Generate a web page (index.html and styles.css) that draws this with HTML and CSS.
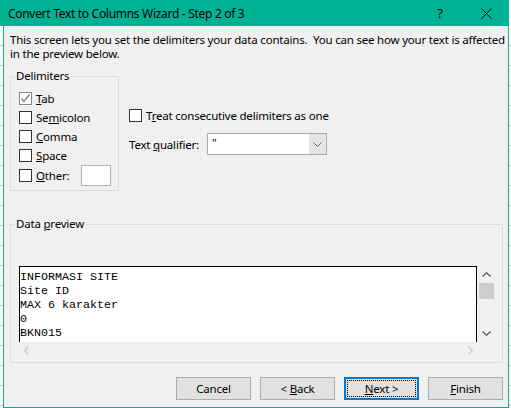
FILE: index.html
```html
<!DOCTYPE html>
<html>
<head>
<meta charset="utf-8">
<link rel="stylesheet" href="styles.css">
</head>
<body>
<div class="screen">
  <div class="titlebar">
    <span class="title">Convert Text to Columns Wizard - Step 2 of 3</span>
    <span class="tb-btn help">?</span>
    <span class="tb-btn close"><svg width="11" height="11" viewBox="0 0 11 11"><path d="M0.5 0.5L10.5 10.5M10.5 0.5L0.5 10.5" stroke="#000" stroke-width="1" fill="none"/></svg></span>
  </div>
  <div class="main">
    <div class="sheet sheet-left"></div>
    <div class="dialog">
      <p class="intro">This screen lets you set the delimiters your data contains.&nbsp; You can see how your text is affected<br>in the preview below.</p>
      <div class="top">
        <div class="group delims">
          <span class="legend">Delimiters</span>
          <div class="check-row"><span class="box checked"><svg width="11" height="11" viewBox="0 0 11 11"><path d="M1.5 5.5L4 8.5L9.5 1.5" stroke="#7a7a7a" stroke-width="1.3" fill="none"/></svg></span><span><u>T</u>ab</span></div>
          <div class="check-row"><span class="box"></span><span>Se<u>m</u>icolon</span></div>
          <div class="check-row"><span class="box"></span><span><u>C</u>omma</span></div>
          <div class="check-row"><span class="box"></span><span><u>S</u>pace</span></div>
          <div class="check-row other-row"><span class="box"></span><span><u>O</u>ther:</span><span class="other-input"></span></div>
        </div>
        <div class="options">
          <div class="check-row"><span class="box"></span><span>T<u>r</u>eat consecutive delimiters as one</span></div>
          <div class="qual-row">
            <span class="qual-label">Text <u>q</u>ualifier:</span>
            <div class="combo">
              <span class="combo-val">"</span>
              <span class="combo-btn"><svg width="9" height="5" viewBox="0 0 9 5"><path d="M0.5 0.5L4.5 4.5L8.5 0.5" stroke="#606060" stroke-width="1" fill="none"/></svg></span>
            </div>
          </div>
        </div>
      </div>
      <div class="group preview-group">
        <span class="legend">Data <u>p</u>review</span>
        <div class="preview">
          <div class="preview-main">
            <div class="preview-text">INFORMASI SITE
Site ID
MAX 6 karakter
0
BKN015</div>
            <div class="vscroll">
              <span class="sb-arrow"><svg width="9" height="5" viewBox="0 0 9 5"><path d="M0.5 4.5L4.5 0.8L8.5 4.5" stroke="#606060" stroke-width="1.4" fill="none"/></svg></span>
              <span class="thumb"></span>
              <span class="sb-space"></span>
              <span class="sb-arrow"><svg width="9" height="5" viewBox="0 0 9 5"><path d="M0.5 0.5L4.5 4.2L8.5 0.5" stroke="#606060" stroke-width="1.4" fill="none"/></svg></span>
            </div>
          </div>
          <div class="hscroll">
            <span class="sb-arrow-h"><svg width="5" height="9" viewBox="0 0 5 9"><path d="M4.5 0.5L0.8 4.5L4.5 8.5" stroke="#cdcdcd" stroke-width="1.4" fill="none"/></svg></span>
            <span class="sb-arrow-h"><svg width="5" height="9" viewBox="0 0 5 9"><path d="M0.5 0.5L4.2 4.5L0.5 8.5" stroke="#cdcdcd" stroke-width="1.4" fill="none"/></svg></span>
          </div>
        </div>
      </div>
      <div class="buttons">
        <span class="btn">Cancel</span>
        <span class="btn">&lt;&nbsp;<u>B</u>ack</span>
        <span class="btn default"><span><u>N</u>ext&nbsp;&gt;</span></span>
        <span class="btn"><u>F</u>inish</span>
      </div>
    </div>
    <div class="sheet sheet-right"></div>
  </div>
</div>
</body>
</html>
```

FILE: styles.css
```css
html, body {
  margin: 0;
  padding: 0;
}
body {
  width: 511px;
  height: 408px;
  overflow: hidden;
  background: #ffffff;
  font-family: "Noto Sans", "DejaVu Sans", sans-serif;
  font-size: 11.5px;
  letter-spacing: -0.2px;
  color: #000;
}
u {
  text-decoration: underline;
  text-decoration-thickness: 1px;
  text-underline-offset: 1px;
}
.screen {
  display: flex;
  flex-direction: column;
}
.titlebar {
  width: 509px;
  height: 26px;
  background: #00b294;
  display: flex;
  align-items: center;
  font-size: 12px;
  letter-spacing: -0.3px;
}
.title {
  flex: 1;
  padding-left: 8px;
}
.tb-btn {
  width: 46px;
  height: 26px;
  display: flex;
  align-items: center;
  justify-content: center;
}
.help {
  font-size: 13px;
}
.main {
  display: flex;
  height: 382px;
}
.sheet {
  background-color: #ffffff;
  background-image: repeating-linear-gradient(to bottom, transparent 0, transparent 19px, #c6c6c6 19px, #c6c6c6 20px);
}
.sheet-left {
  width: 3px;
}
.sheet-right {
  width: 2px;
}
.dialog {
  width: 506px;
  height: 382px;
  box-sizing: border-box;
  border: 1px solid #00b294;
  border-top: none;
  background: #f0f0f0;
  padding: 0 5px 7px 6px;
}
.intro {
  margin: 0;
  padding-top: 7px;
  line-height: 14px;
  white-space: nowrap;
}
.top {
  display: flex;
  align-items: flex-start;
  margin-top: 15px;
}
.group {
  position: relative;
  border: 1px solid #dcdcdc;
  box-sizing: border-box;
}
.legend {
  position: absolute;
  top: -8px;
  left: 4px;
  padding: 0 1px;
  background: #f0f0f0;
  line-height: 14px;
}
.delims {
  width: 109px;
  height: 115px;
  padding: 12px 7px 0 8px;
}
.check-row {
  display: flex;
  align-items: center;
  height: 19px;
  white-space: nowrap;
}
.other-row {
  height: 21px;
}
.box {
  width: 13px;
  height: 13px;
  box-sizing: border-box;
  border: 1px solid #333333;
  background: #ffffff;
  margin-right: 4px;
  flex: none;
  display: flex;
  align-items: center;
  justify-content: center;
}
.box.checked {
  border-color: #8a8a8a;
}
.other-input {
  margin-left: auto;
  width: 30px;
  height: 21px;
  box-sizing: border-box;
  border: 1px solid #b4b4b4;
  background: #ffffff;
}
.options {
  margin-left: 10px;
  padding-top: 30px;
}
.qual-row {
  display: flex;
  align-items: center;
  margin-top: 8px;
  height: 22px;
}
.qual-label {
  width: 78px;
  white-space: nowrap;
}
.combo {
  width: 120px;
  height: 22px;
  box-sizing: border-box;
  border: 1px solid #adadad;
  background: #ffffff;
  display: flex;
}
.combo-val {
  flex: 1;
  padding-left: 4px;
  line-height: 18px;
}
.combo-btn {
  width: 17px;
  background: #e5e5e5;
  display: flex;
  align-items: center;
  justify-content: center;
}
.preview-group {
  margin-top: 33px;
  height: 139px;
  padding: 41px 7px 0 8px;
}
.preview {
  width: 476px;
}
.preview-main {
  display: flex;
  height: 76px;
}
.preview-text {
  width: 458px;
  box-sizing: border-box;
  border: 1px solid #000;
  border-bottom: none;
  background: #ffffff;
  font-family: "Liberation Mono", "Courier New", monospace;
  font-size: 11.67px;
  letter-spacing: 0;
  line-height: 14px;
  padding: 3px 0 0 0;
  white-space: pre;
  overflow: hidden;
}
.vscroll {
  width: 18px;
  display: flex;
  flex-direction: column;
  align-items: center;
}
.sb-arrow {
  height: 17px;
  display: flex;
  align-items: center;
  justify-content: center;
}
.thumb {
  width: 15px;
  height: 16px;
  background: #cdcdcd;
}
.sb-space {
  flex: 1;
}
.hscroll {
  height: 17px;
  display: flex;
  justify-content: space-between;
  align-items: center;
  padding: 0 22px 0 5px;
}
.sb-arrow-h {
  display: flex;
}
.buttons {
  display: flex;
  justify-content: flex-end;
  gap: 9px;
  margin-top: 14px;
}
.btn {
  width: 75px;
  height: 23px;
  box-sizing: border-box;
  border: 1px solid #adadad;
  background: #e1e1e1;
  display: flex;
  align-items: center;
  justify-content: center;
  white-space: nowrap;
}
.btn.default {
  border: 2px solid #0078d7;
  outline: 1px dotted #000;
  outline-offset: -4px;
}
```
